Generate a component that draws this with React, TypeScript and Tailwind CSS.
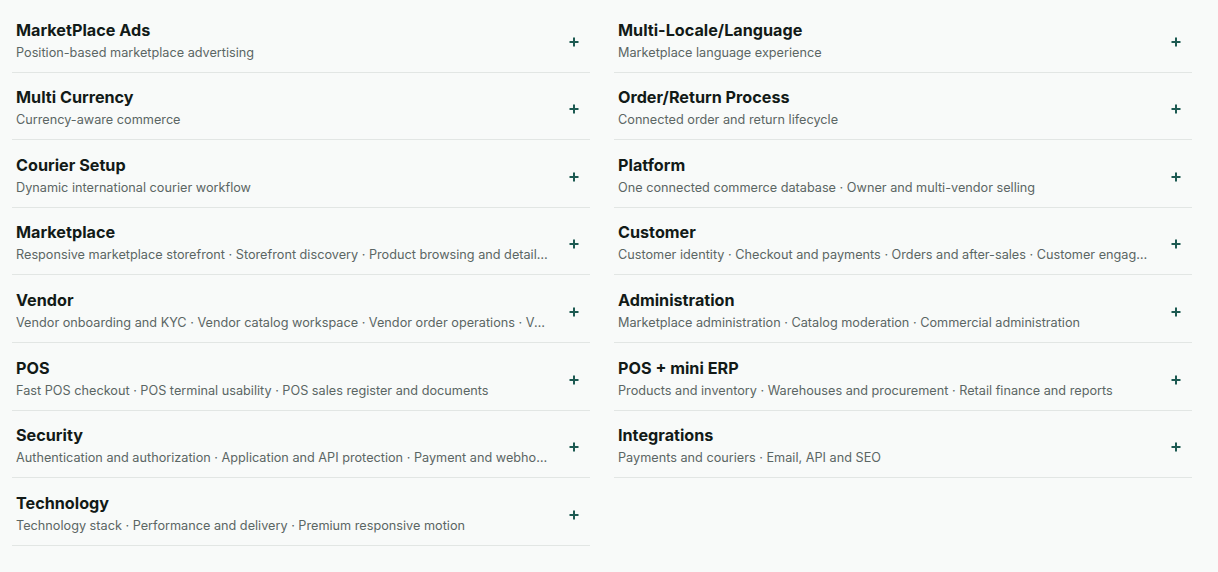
import React from "react";

type Feature = { title: string; items: string[] };

const leftFeatures: Feature[] = [
  { title: "MarketPlace Ads", items: ["Position-based marketplace advertising"] },
  { title: "Multi Currency", items: ["Currency-aware commerce"] },
  { title: "Courier Setup", items: ["Dynamic international courier workflow"] },
  {
    title: "Marketplace",
    items: ["Responsive marketplace storefront", "Storefront discovery", "Product browsing and details", "Cart and wishlist"],
  },
  {
    title: "Vendor",
    items: ["Vendor onboarding and KYC", "Vendor catalog workspace", "Vendor order operations", "Vendor payouts"],
  },
  {
    title: "POS",
    items: ["Fast POS checkout", "POS terminal usability", "POS sales register and documents"],
  },
  {
    title: "Security",
    items: ["Authentication and authorization", "Application and API protection", "Payment and webhook security"],
  },
  {
    title: "Technology",
    items: ["Technology stack", "Performance and delivery", "Premium responsive motion"],
  },
];

const rightFeatures: Feature[] = [
  { title: "Multi-Locale/Language", items: ["Marketplace language experience"] },
  { title: "Order/Return Process", items: ["Connected order and return lifecycle"] },
  {
    title: "Platform",
    items: ["One connected commerce database", "Owner and multi-vendor selling"],
  },
  {
    title: "Customer",
    items: ["Customer identity", "Checkout and payments", "Orders and after-sales", "Customer engagement"],
  },
  {
    title: "Administration",
    items: ["Marketplace administration", "Catalog moderation", "Commercial administration"],
  },
  {
    title: "POS + mini ERP",
    items: ["Products and inventory", "Warehouses and procurement", "Retail finance and reports"],
  },
  { title: "Integrations", items: ["Payments and couriers", "Email, API and SEO"] },
];

const PlusIcon: React.FC = () => (
  <svg width="10" height="10" viewBox="0 0 10 10" fill="none">
    <path d="M5 0.5v9M0.5 5h9" stroke="#1d5a52" strokeWidth="2" />
  </svg>
);

const FeatureRow: React.FC<{ feature: Feature }> = ({ feature }) => (
  <div className="flex items-center gap-2 border-b border-[#e2e6e4] pl-1 pt-[11.6px] pb-[10px]">
    <div className="flex-1 min-w-0">
      <div className="text-[16.2px] leading-[27px] font-bold text-[#121a17]">
        {feature.title}
      </div>
      <div className="text-[12.7px] leading-[18px] text-[#5b6664] truncate">
        {feature.items.join(" · ")}
      </div>
    </div>
    <button className="w-8 h-8 mt-[5px] flex items-center justify-center shrink-0">
      <PlusIcon />
    </button>
  </div>
);

export default function App() {
  return (
    <div
      className="min-h-[572px] bg-[#f8faf9] pt-[5px]"
      style={{ fontFamily: "Inter, 'Noto Sans', sans-serif" }}
    >
      <div className="ml-3 w-[1180px] grid grid-cols-2 gap-x-6 items-start">
        <div className="flex flex-col">
          {leftFeatures.map((f) => (
            <FeatureRow key={f.title} feature={f} />
          ))}
        </div>
        <div className="flex flex-col">
          {rightFeatures.map((f) => (
            <FeatureRow key={f.title} feature={f} />
          ))}
        </div>
      </div>
    </div>
  );
}
